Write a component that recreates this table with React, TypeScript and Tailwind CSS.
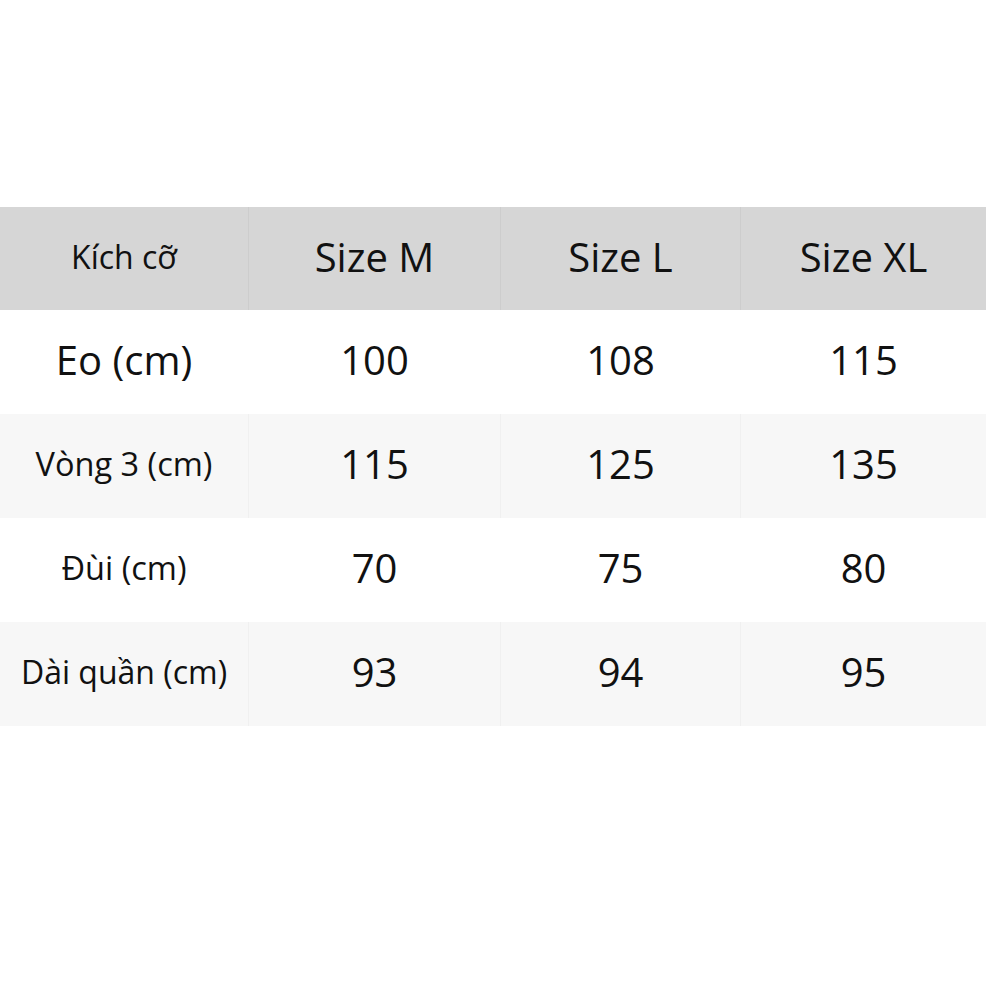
const rows = [
  { label: "Eo (cm)", labelClass: "text-[40px]", values: ["100", "108", "115"], shaded: false },
  { label: "Vòng 3 (cm)", labelClass: "text-[32.5px]", values: ["115", "125", "135"], shaded: true },
  { label: "Đùi (cm)", labelClass: "text-[32.5px]", values: ["70", "75", "80"], shaded: false },
  { label: "Dài quần (cm)", labelClass: "text-[32px]", values: ["93", "94", "95"], shaded: true },
];

const sizes = ["Size M", "Size L", "Size XL"];

const App = () => {
  return (
    <div
      className="h-[986px] w-[986px] bg-white pt-[207px] text-[#111]"
      style={{ fontFamily: '"Open Sans", "Noto Sans", sans-serif' }}
    >
      <div className="grid grid-cols-[248px_252px_240px_1fr]">
        {/* header */}
        <div className="flex h-[103px] items-center justify-center bg-[#d6d6d6] pb-1 text-[32px]">
          Kích cỡ
        </div>
        {sizes.map((s) => (
          <div
            key={s}
            className="flex h-[103px] items-center justify-center border-l border-[#cdcdcd] bg-[#d6d6d6] pb-1 text-[40px]"
          >
            {s}
          </div>
        ))}

        {rows.map((row) => (
          <div key={row.label} className="contents">
            <div
              className={`flex h-[104px] items-center justify-center pb-1 ${row.shaded ? "bg-[#f7f7f7]" : "bg-white"} ${row.labelClass}`}
            >
              {row.label}
            </div>
            {row.values.map((v, i) => (
              <div
                key={i}
                className={`flex h-[104px] items-center justify-center border-l pb-1 text-[40px] ${row.shaded ? "border-[#f0f0f0] bg-[#f7f7f7]" : "border-white bg-white"}`}
              >
                {v}
              </div>
            ))}
          </div>
        ))}
      </div>
    </div>
  );
};

export default App;
